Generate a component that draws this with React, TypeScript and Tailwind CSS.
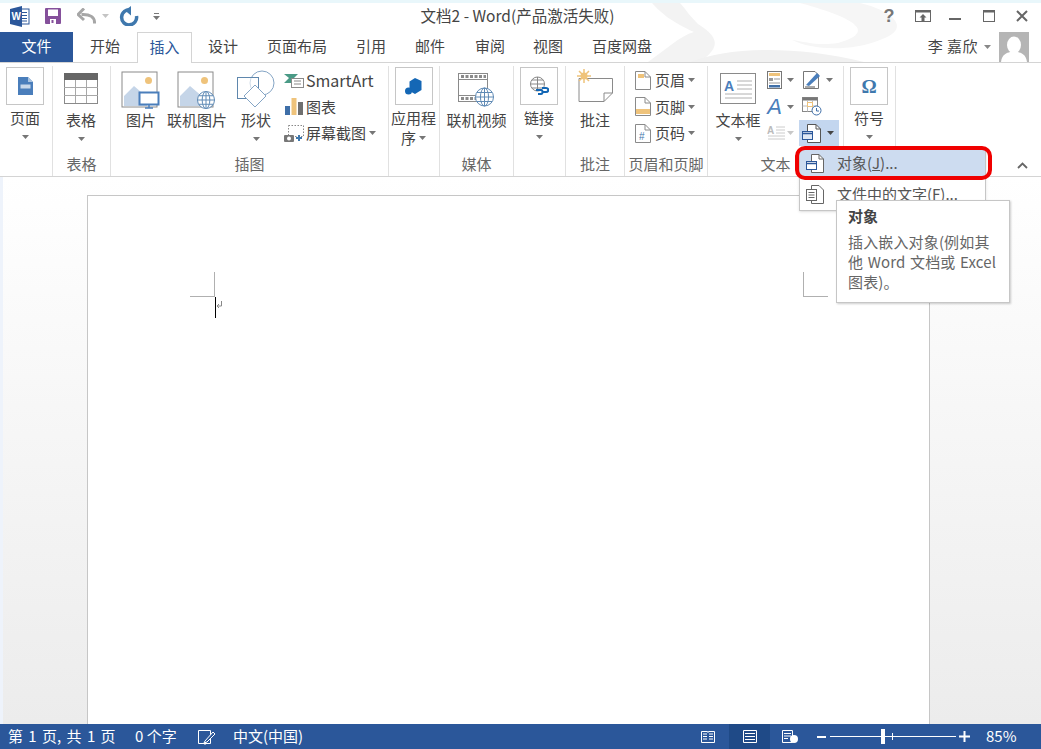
import React from "react";

const font = { fontFamily: '"Noto Sans CJK SC", sans-serif' };

function Caret({ color = "#767676", cls = "" }: { color?: string; cls?: string }) {
  return (
    <svg width="7" height="4" viewBox="0 0 7 4" className={cls}>
      <path d="M0 0H7L3.5 4Z" fill={color} />
    </svg>
  );
}

const S = ({ w, h, children }: { w: number; h: number; children: React.ReactNode }) => (
  <svg width={w} height={h} viewBox={`0 0 ${w} ${h}`} fill="none" className="shrink-0 block">
    {children}
  </svg>
);

const Globe = ({ x, y, r }: { x: number; y: number; r: number }) => (
  <g stroke="#5f8ab5" strokeWidth="1" fill="#fff">
    <circle cx={x} cy={y} r={r} />
    <ellipse cx={x} cy={y} rx={r * 0.45} ry={r} />
    <path d={`M${x - r} ${y}H${x + r}M${x - r * 0.85} ${y - r * 0.5}H${x + r * 0.85}M${x - r * 0.85} ${y + r * 0.5}H${x + r * 0.85}M${x} ${y - r}V${y + r}`} />
  </g>
);

const Picture = ({ children }: { children: React.ReactNode }) => (
  <S w={40} h={38}>
    <rect x="1" y="1" width="35" height="35" fill="#fff" stroke="#8a8a8a" />
    <circle cx="27.5" cy="9.5" r="3.5" fill="#efc37b" />
    <path d="M3 35V25L13 15L20 21L26 26V35Z" fill="#c5d5e8" />
    {children}
  </S>
);

function Big({
  w, top, gap, label, caret, icon, cls = "",
}: { w: number; top: number; gap: number; label: string; caret?: boolean; icon: React.ReactNode; cls?: string }) {
  return (
    <div className={`flex flex-col items-center shrink-0 ${cls}`} style={{ width: w, paddingTop: top }}>
      {icon}
      <div className="leading-[20px] whitespace-nowrap" style={{ marginTop: gap }}>{label}</div>
      {caret && <Caret cls="mt-[7px]" />}
    </div>
  );
}

function Boxed({ children }: { children: React.ReactNode }) {
  return (
    <div className="w-[38px] h-[38px] border border-[#c6c6c6] flex items-center justify-center bg-white">{children}</div>
  );
}

function Group({ w, label, children, cls = "" }: { w: number; label?: string; children: React.ReactNode; cls?: string }) {
  return (
    <div className="relative shrink-0 h-[110px] mt-[3px] border-r border-[#e1e1e1] flex flex-col" style={{ width: w }}>
      <div className={`flex-1 flex ${cls}`}>{children}</div>
      <div className="h-[24px] pt-[2px] leading-[20px] text-center text-[#666] whitespace-nowrap">{label}</div>
    </div>
  );
}

function Small({ icon, label, caret, cls = "" }: { icon: React.ReactNode; label: string; caret?: boolean; cls?: string }) {
  return (
    <div className="h-[26.5px] flex items-center whitespace-nowrap">
      <div className="w-[22px] flex justify-center">{icon}</div>
      <span className={`leading-[20px] ml-[1px] ${cls}`}>{label}</span>
      {caret && <Caret cls="ml-[3px]" />}
    </div>
  );
}

const PageIcon = ({ children }: { children?: React.ReactNode }) => (
  <S w={16} h={19}>
    <path d="M.5.5H10L15.5 6V18.5H.5Z" fill="#fff" stroke="#8a8a8a" />
    <path d="M10 .5V6H15.5" stroke="#8a8a8a" />
    {children}
  </S>
);

export default function App() {
  const tabs: [string, string][] = [["设计", "ml-[16px]"], ["页面布局", "ml-[29px]"], ["引用", "ml-[29px]"], ["邮件", "ml-[29px]"], ["审阅", "ml-[30px]"], ["视图", "ml-[28px]"], ["百度网盘", "ml-[29px]"]];
  return (
    <div className="relative w-[1041px] h-[749px] overflow-hidden bg-white flex flex-col text-[15px] text-[#444]" style={font}>
      {/* background art */}
      <svg className="absolute left-0 top-0" width="1041" height="63" viewBox="0 0 1041 63">
        <rect width="1041" height="3" fill="#e9f7fb" />
        <path d="M652 3C662 14 672 22 694 32C680 36 668 48 648 62H700C716 50 724 40 698 24C690 16 686 10 680 3Z" fill="#f3f3f3" />
        <path d="M690 62C726 48 790 44 864 62Z" fill="#f1f1f1" />
        <path d="M800 3C840 14 885 30 838 43C818 46 806 42 792 40C812 50 850 52 880 40C915 28 890 10 860 3Z" fill="#f6f6f6" />
      </svg>

      {/* title bar */}
      <div className="relative h-[32px] flex items-center shrink-0">
        <div className="w-[165px] relative h-[32px] flex items-center shrink-0">
          <div className="ml-[10px] w-[20px] h-[20px]">
            <svg width="20" height="21" viewBox="0 0 20 21">
              <rect x="9" y="3" width="10" height="15" fill="#fff" stroke="#2b579a" />
              <path d="M11 6.5H17M11 9.5H17M11 12.5H17M11 15H17" stroke="#2b579a" />
              <path d="M0 3L12 0V21L0 18Z" fill="#2b579a" />
              <text x="1.5" y="14" fontSize="10" fontWeight="700" fill="#fff" fontFamily="Liberation Sans">W</text>
            </svg>
          </div>
          <div className="ml-[15px]">
            <S w={16} h={16}>
              <rect width="16" height="16" rx="1" fill="#85509b" />
              <rect x="3" y="1.5" width="10" height="6.5" fill="#fff" />
              <rect x="5" y="11" width="6" height="5" fill="#fff" />
              <rect x="6.5" y="12" width="2" height="3" fill="#85509b" />
            </S>
          </div>
          <div className="ml-[16px]">
            <S w={19} h={16}>
              <path d="M17.5 15.5C18 9 13 6 4.5 6.5" stroke="#a6a6a6" strokeWidth="3" />
              <path d="M7 .5L1 6.5L7 12" stroke="#a6a6a6" strokeWidth="3" />
            </S>
          </div>
          <Caret color="#c4c4c4" cls="ml-[6px]" />
          <div className="ml-[10px]">
            <S w={20} h={20}>
              <path d="M11.5 4A7.5 7.5 0 1 0 17.5 10" stroke="#3f78ad" strokeWidth="3.5" />
              <path d="M12 0V9.5L6 4.5Z" fill="#3f78ad" />
            </S>
          </div>
          <div className="ml-[14px] flex flex-col items-center gap-[2px]">
            <div className="w-[5px] h-[1px] bg-[#777]" />
            <Caret color="#777" />
          </div>
        </div>
        <div className="flex-1 text-center pr-[5px] text-[15.5px] text-[#444] whitespace-nowrap">文档2 - Word(产品激活失败)</div>
        <div className="w-[166px] h-[32px] relative flex items-center shrink-0 pl-[6px]">
          <div className="w-[16px] text-center font-bold text-[#777] text-[18px]" style={{ fontFamily: '"Liberation Sans", sans-serif' }}>?</div>
          <div className="ml-[18px]">
            <S w={16} h={12}>
              <rect x=".5" y=".5" width="15" height="11" stroke="#666" />
              <rect x=".5" y=".5" width="15" height="2" fill="#666" />
              <path d="M8 4L11.5 7.5H9.5V11H6.5V7.5H4.5Z" fill="#666" />
            </S>
          </div>
          <div className="ml-[18px] w-[12px] h-[2px] bg-[#666] mt-[5px]" />
          <div className="ml-[22px]">
            <S w={12} h={12}>
              <rect x=".5" y=".5" width="11" height="11" stroke="#666" />
              <rect x=".5" y=".5" width="11" height="2" fill="#666" />
            </S>
          </div>
          <div className="ml-[21px]">
            <S w={12} h={12}>
              <path d="M1 1L11 11M11 1L1 11" stroke="#666" strokeWidth="2" />
            </S>
          </div>
        </div>
      </div>

      {/* tabs */}
      <div className="relative h-[31px] shrink-0 flex items-stretch border-b border-[#d4d4d4]">
        <div className="w-[73px] h-[30px] pb-[2px] bg-[#2b579a] text-white flex items-center justify-center">文件</div>
        <div className="ml-[17px] pb-[2px] flex items-center">开始</div>
        <div className="ml-[17px] w-[55px] h-[31px] pb-[2px] border border-b-0 border-[#d4d4d4] bg-white text-[#2b579a] flex items-center justify-center">插入</div>
        {tabs.map(([t, c]) => (
          <div key={t} className={`${c} pb-[2px] flex items-center`}>{t}</div>
        ))}
        <div className="ml-auto mr-[12px] flex items-center">
          <span className="text-[#444] tracking-[0.5px] pb-[2px]">李 嘉欣</span>
          <Caret color="#888" cls="ml-[6px]" />
          <div className="ml-[8px] w-[30px] h-[30px] bg-[#b5b5b5] overflow-hidden">
            <S w={30} h={30}>
              <ellipse cx="15" cy="13" rx="7" ry="8.5" fill="#fff" />
              <path d="M2 30C3 22 8 21 11 20H19C22 21 27 22 28 30Z" fill="#fff" />
            </S>
          </div>
        </div>
      </div>

      {/* ribbon */}
      <div className="relative h-[114px] shrink-0 flex bg-white border-b border-[#d4d4d4]">
        <Group w={53}>
          <Big w={38} cls="ml-[6px]" top={1} gap={3} label="页面" caret icon={
            <Boxed>
              <S w={15} h={18}>
                <path d="M0 0H10L15 5V18H0Z" fill="#4a7ebb" />
                <path d="M10 0V5H15Z" fill="#a9c3e0" />
                <rect x="2.5" y="7.5" width="10" height="4" fill="#c8d8ea" />
              </S>
            </Boxed>
          } />
        </Group>
        <Group w={58} label="表格" cls="pr-[1px]">
          <Big w={56} top={7} gap={6} label="表格" caret icon={
            <S w={34} h={31}>
              <rect x=".5" y=".5" width="33" height="30" fill="#fff" stroke="#8a8a8a" />
              <rect width="34" height="7" fill="#666" />
              <path d="M11.5 7V30M22.5 7V30M0 14.5H34M0 22.5H34" stroke="#a8a8a8" />
            </S>
          } />
        </Group>
        <Group w={278} label="插图" cls="pl-[3px]">
          <Big w={54} top={5} gap={1} label="图片" icon={
            <Picture>
              <rect x="18.5" y="21.5" width="19" height="12" fill="#fff" stroke="#4a7ebb" strokeWidth="2" />
              <path d="M24 37H32M28 34V37" stroke="#4a7ebb" strokeWidth="1.5" />
            </Picture>
          } />
          <Big w={58} top={5} gap={1} label="联机图片" icon={
            <Picture><Globe x={29} y={29} r={8.5} /></Picture>
          } />
          <Big w={54} cls="ml-[3px]" top={4} gap={2} label="形状" caret icon={
            <S w={38} h={38}>
              <circle cx="25" cy="13" r="12" stroke="#85a5c5" fill="#fff" />
              <rect x=".5" y="7.5" width="21" height="21" stroke="#5f87ad" fill="#fff" fillOpacity="0.6" />
              <path d="M18 15L29 26L18 37L7 26Z" stroke="#85a5c5" fill="#fff" />
            </S>
          } />
          <div className="pt-[1px]">
            <Small cls="text-[16px]" icon={
              <S w={20} h={15}>
                <path d="M0 1H14L10 5L14 10H0L5 5Z" fill="#4a9a86" />
                <rect x="7.5" y="5.5" width="12" height="9" fill="#fff" stroke="#8a8a8a" />
                <path d="M10 8H17M10 11H17" stroke="#8a8a8a" />
              </S>
            } label="SmartArt" />
            <Small icon={
              <S w={18} h={17}>
                <rect y="8" width="5" height="9" fill="#3f6fa8" />
                <rect x="6.5" width="5" height="17" fill="#efc37b" />
                <rect x="13" y="4" width="5" height="13" fill="#6f6f6f" />
              </S>
            } label="图表" />
            <Small caret icon={
              <S w={20} h={17}>
                <rect x="4.5" y=".5" width="15" height="11" stroke="#888" strokeDasharray="1.5 1.5" />
                <rect x="0" y="10" width="10" height="7" rx="1" fill="#777" />
                <circle cx="5" cy="13.5" r="2" fill="#fff" />
                <path d="M15 10V16M12 13H18" stroke="#3f78ad" strokeWidth="2" />
              </S>
            } label="屏幕截图" />
          </div>
        </Group>
        <Group w={51}>
          <div className="w-full pr-[1px] flex flex-col items-center pt-[1px]">
            <Boxed>
              <S w={17} h={17}>
                <path d="M10 0L16.5 3V12L10 16L4.5 13V3.5Z" fill="#1467b5" />
                <circle cx="3.5" cy="13" r="3.5" fill="#1467b5" />
              </S>
            </Boxed>
            <div className="leading-[20px] mt-[3px] whitespace-nowrap">应用程</div>
            <div className="leading-[20px] flex items-center">序<Caret cls="ml-[3px]" /></div>
          </div>
        </Group>
        <Group w={74} label="媒体">
          <Big w={73} top={7} gap={2} label="联机视频" icon={
            <S w={37} h={35}>
              <rect x=".5" y=".5" width="29" height="28" fill="#fff" stroke="#8a8a8a" />
              <path d="M.5 6.5H29.5M.5 22.5H29.5" stroke="#8a8a8a" />
              <path d="M3 3.5H28M3 25.5H20" stroke="#8a8a8a" strokeWidth="3" strokeDasharray="3 1.5" />
              <Globe x={26.5} y={24} r={9} />
            </S>
          } />
        </Group>
        <Group w={52}>
          <div className="w-full pr-[1px] flex justify-center">
            <Big w={44} top={1} gap={3} label="链接" caret icon={
              <Boxed>
                <S w={20} h={20}>
                  <g stroke="#888" fill="#fff">
                    <circle cx="8.5" cy="8" r="7" />
                    <path d="M1.5 8H15.5M8.5 1V15M3 4H14M3 12H14" />
                  </g>
                  <path d="M7 14H12C14 14 14 18 12 18H9M13 12H17C20 12 20 16 17 16H14" stroke="#1467b5" strokeWidth="2" />
                </S>
              </Boxed>
            } />
          </div>
        </Group>
        <Group w={59} label="批注">
          <Big w={58} top={3} gap={8} label="批注" icon={
            <S w={38} h={33}>
              <path d="M3 9.5H36.5V24L28 32.5H3Z" fill="#fff" stroke="#8a8a8a" />
              <path d="M36.5 24H28V32.5" stroke="#8a8a8a" />
              <g stroke="#efc37b" strokeWidth="1.5">
                <path d="M8 0V14M1 7H15M3 2L13 12M13 2L3 12" />
              </g>
              <circle cx="8" cy="7" r="3.5" fill="#efc37b" />
            </S>
          } />
        </Group>
        <Group w={83} label="页眉和页脚" cls="pl-[7px]">
          <div className="pt-[1px]">
            <Small caret icon={<PageIcon><rect x="3" y="3" width="6" height="4" fill="#efc37b" /></PageIcon>} label="页眉" />
            <Small caret icon={<PageIcon><rect x="1" y="12" width="14" height="5" fill="#efc37b" /></PageIcon>} label="页脚" />
            <Small caret icon={<PageIcon><text x="4" y="16" fontSize="10" fill="#3f78ad" fontFamily="Liberation Sans">#</text></PageIcon>} label="页码" />
          </div>
        </Group>
        <Group w={136} label="文本">
          <Big w={60} top={7} gap={6} label="文本框" caret icon={
            <S w={36} h={31}>
              <rect x=".5" y=".5" width="35" height="30" fill="#fff" stroke="#8a8a8a" />
              <text x="4" y="18" fontSize="14" fontWeight="700" fill="#4a7ebb" fontFamily="Liberation Sans">A</text>
              <path d="M17 8H32M17 12H32M17 16H32M5 21H32M5 25H32" stroke="#b0b0b0" />
            </S>
          } />
          <div className="flex flex-col ml-[-1px]">
            <div className="h-[27px] flex items-center">
              <S w={15} h={18}>
                <rect x=".5" y=".5" width="14" height="17" fill="#fff" stroke="#777" />
                <rect x="2" y="2" width="11" height="3" fill="#efc37b" />
                <rect x="2" y="7" width="4" height="3" fill="#999" />
                <path d="M7 8H13M2 12H13" stroke="#999" />
                <rect x="2" y="14" width="11" height="2.5" fill="#3f6fa8" />
              </S>
              <Caret cls="ml-[5px]" />
            </div>
            <div className="h-[27px] flex items-center">
              <span className="w-[15px] text-center italic font-normal text-[22px] text-[#4a7ebb] leading-none" style={{ fontFamily: '"Liberation Sans", sans-serif' }}>A</span>
              <Caret cls="ml-[5px]" />
            </div>
            <div className="h-[26px] flex items-center">
              <S w={18} h={18}>
                <text x="0" y="10" fontSize="10" fontWeight="700" fill="#bbb" fontFamily="Liberation Sans">A</text>
                <path d="M9 3H18M9 6H18M9 9H18M1 12H18M1 15H18" stroke="#ccc" />
              </S>
              <Caret color="#c8c8c8" cls="ml-[2px]" />
            </div>
          </div>
          <div className="flex flex-col ml-[5px]">
            <div className="h-[27px] flex items-center pl-[4px]">
              <S w={18} h={18}>
                <path d="M.5.5H12L15.5 4V17.5H.5Z" fill="#fff" stroke="#777" />
                <path d="M3 14L14 2L17 5L6 15Z" fill="#4a7ebb" />
                <path d="M2 16H12" stroke="#555" />
              </S>
              <Caret cls="ml-[5px]" />
            </div>
            <div className="h-[27px] flex items-center pl-[3px]">
              <S w={20} h={19}>
                <rect x=".5" y=".5" width="15" height="14" fill="#fff" stroke="#888" />
                <rect x=".5" y=".5" width="15" height="3" fill="#777" />
                <path d="M5.5 3.5V14.5M10.5 3.5V14.5M.5 9H15.5" stroke="#bbb" />
                <rect x="5.5" y="5.5" width="5" height="4" fill="#fff" stroke="#efc37b" />
                <circle cx="14.5" cy="13.5" r="4.5" fill="#fff" stroke="#3f6fa8" />
                <path d="M14.5 11V14H17" stroke="#3f6fa8" />
              </S>
            </div>
            <div className="w-[40px] h-[26px] bg-[#c3d6ef] flex items-center pl-[3px]">
              <S w={20} h={19}>
                <path d="M5.5.5H14L18.5 5V18.5H5.5Z" fill="#fff" stroke="#555" />
                <path d="M14 .5V5H18.5" stroke="#555" />
                <rect x=".5" y="7.5" width="10" height="8" fill="#dfe8f4" stroke="#2b579a" />
                <path d="M.5 9.5H10.5" stroke="#2b579a" strokeWidth="1.5" />
              </S>
              <Caret color="#444" cls="ml-[5px]" />
            </div>
          </div>
        </Group>
        <Group w={52}>
          <div className="w-full pr-[1px] flex justify-center">
            <Big w={44} top={1} gap={3} label="符号" caret icon={
              <Boxed>
                <span className="text-[#3f78ad] font-bold text-[19px] leading-none" style={{ fontFamily: '"Liberation Serif", serif' }}>Ω</span>
              </Boxed>
            } />
          </div>
        </Group>
        <svg className="absolute left-[1017px] top-[99px]" width="11" height="7" viewBox="0 0 11 7">
          <path d="M1 6L5.5 1.5L10 6" stroke="#666" strokeWidth="1.8" fill="none" />
        </svg>
      </div>

      {/* document area */}
      <div className="flex-1 min-h-0 bg-gradient-to-b from-white to-[#ececec] border-l-[3px] border-[#eef3fb] pt-[18px] pl-[84px] pr-[111px] overflow-hidden">
        <div className="relative h-full bg-white border-l border-r border-t border-[#c6c6c6]">
          <div className="absolute left-[102px] top-[76px] w-[25px] h-[25px] border-r border-b border-[#b0b0b0]" />
          <div className="absolute left-[715px] top-[76px] w-[25px] h-[25px] border-l border-b border-[#b0b0b0]" />
          <div className="absolute left-[127px] top-[101px] w-[1px] h-[21px] bg-black" />
          <svg className="absolute left-[128px] top-[104px]" width="7" height="10" viewBox="0 0 7 10">
            <path d="M5.5 1V6H1M3 4L1 6L3 8" stroke="#888" fill="none" />
          </svg>
        </div>
      </div>

      {/* status bar */}
      <div className="h-[25px] shrink-0 bg-[#2b579a] text-white text-[15px] flex items-center relative">
        <span className="ml-[8px] w-[127px] whitespace-nowrap [word-spacing:2px]">第 1 页, 共 1 页</span>
        <span className="w-[63px] whitespace-nowrap">0 个字</span>
        <S w={18} h={16}>
          <path d="M.5 1.5H12.5V14.5H.5ZM8 14.5L6.5 16" stroke="#fff" />
          <path d="M7 12L15 3L17 5L9 13L6 14Z" fill="#2b579a" stroke="#fff" />
        </S>
        <span className="ml-[17px] whitespace-nowrap">中文(中国)</span>
        <div className="ml-auto h-full flex items-center">
          <S w={14} h={13}>
            <path d="M.5 1.5H6.5L7 2.5L7.5 1.5H13.5V12.5H.5Z" stroke="#fff" />
            <path d="M2 4H6M2 6.5H6M2 9H6M8 4H12M8 6.5H12M8 9H12" stroke="#fff" />
          </S>
          <div className="ml-[14px] w-[41px] h-full bg-[#1f4a87] flex items-center justify-center">
            <S w={14} h={13}>
              <path d="M.5.5H13.5V12.5H.5Z" stroke="#fff" />
              <path d="M2 3.5H12M2 6.5H12M2 9.5H12" stroke="#fff" />
            </S>
          </div>
          <div className="ml-[12px]">
            <S w={16} h={13}>
              <path d="M.5.5H10.5V12.5H.5Z" stroke="#fff" />
              <path d="M2 3.5H9M2 6H9M2 8.5H6" stroke="#fff" />
              <circle cx="12" cy="9" r="4" fill="#fff" />
            </S>
          </div>
          <div className="ml-[19px] w-[9px] h-[2px] bg-white" />
          <div className="relative ml-[4px] w-[126px] h-[1px] bg-white">
            <div className="absolute left-[51px] top-[-7px] w-[4px] h-[15px] bg-white" />
            <div className="absolute left-[62px] top-[-3px] w-[1px] h-[7px] bg-white" />
          </div>
          <svg className="ml-[3px]" width="11" height="11" viewBox="0 0 11 11">
            <path d="M5.5 0V11M0 5.5H11" stroke="#fff" strokeWidth="2" />
          </svg>
          <span className="ml-[16px] mr-[24px] w-[31px] whitespace-nowrap">85%</span>
        </div>
      </div>

      {/* dropdown menu */}
      <div className="absolute left-[799px] top-[148px] w-[187px] h-[63px] bg-white border border-[#c6c6c6] shadow-sm">
        <div className="h-[29px] bg-[#cddcf0] flex items-center pl-[6px]">
          <S w={18} h={19}>
            <path d="M5.5.5H13L17.5 5V18.5H5.5Z" fill="#fff" stroke="#666" />
            <path d="M13 .5V5H17.5" stroke="#666" />
            <rect x=".5" y="7.5" width="10" height="8" fill="#fff" stroke="#2b579a" />
            <path d="M.5 9.5H10.5" stroke="#2b579a" strokeWidth="1.5" />
          </S>
          <span className="ml-[13px] text-[#555] text-[15px] whitespace-nowrap">对象(<u>J</u>)...</span>
        </div>
        <div className="h-[32px] flex items-center pl-[6px]">
          <S w={18} h={19}>
            <path d="M5.5.5H13L17.5 5V18.5H5.5Z" fill="#fff" stroke="#666" />
            <rect x=".5" y="4.5" width="10" height="11" fill="#fff" stroke="#666" />
            <path d="M2.5 7.5H8.5M2.5 10H8.5M2.5 12.5H8.5" stroke="#666" />
          </S>
          <span className="ml-[13px] text-[#555] text-[15px] whitespace-nowrap">文件中的文字(<u>F</u>)...</span>
        </div>
      </div>

      {/* red highlight */}
      <div className="absolute left-[795px] top-[146px] w-[197px] h-[34px] border-[4px] border-[#f00000] rounded-[10px]" />

      {/* tooltip */}
      <div className="absolute left-[836px] top-[200px] w-[174px] h-[103px] bg-white border border-[#c6c6c6] shadow-[1px_1px_2px_rgba(0,0,0,0.2)] pl-[11px] pt-[5px] text-[15px] text-[#666]">
        <div className="font-bold leading-[20px] text-[#444]">对象</div>
        <div className="mt-[6px] leading-[20px] whitespace-nowrap [word-spacing:1px] tracking-[0.15px]">
          <div>插入嵌入对象(例如其</div>
          <div>他 Word 文档或 Excel</div>
          <div>图表)。</div>
        </div>
      </div>
    </div>
  );
}
